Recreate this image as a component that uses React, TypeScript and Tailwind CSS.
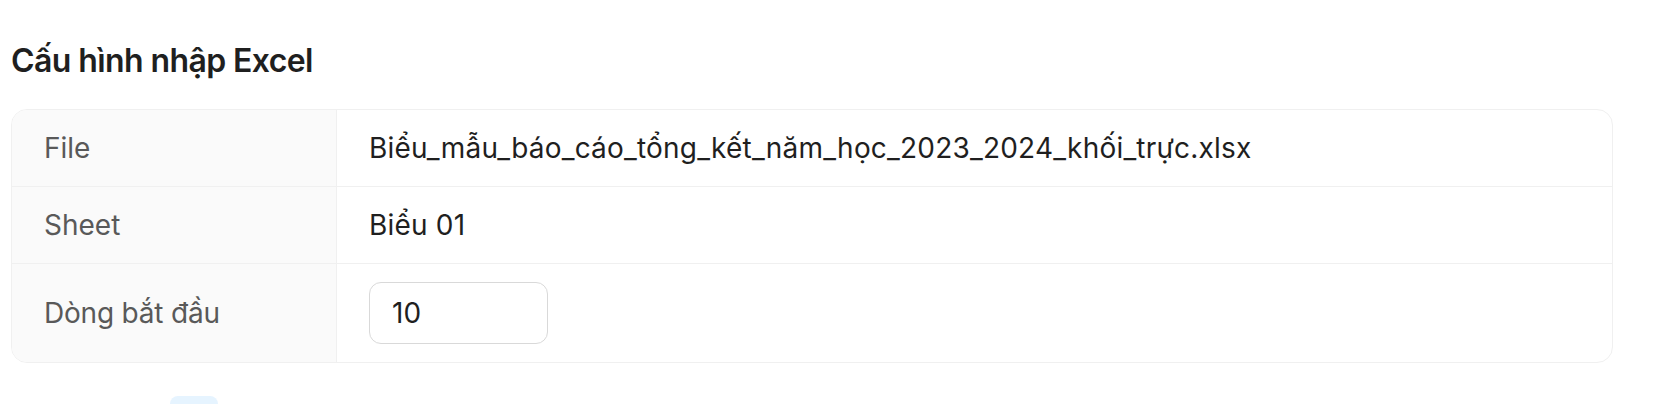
const font = { fontFamily: 'Inter, "Noto Sans", sans-serif' }

const rows = [
  { label: 'File', value: 'Biểu_mẫu_báo_cáo_tổng_kết_năm_học_2023_2024_khối_trực.xlsx' },
  { label: 'Sheet', value: 'Biểu 01' },
]

export default function App() {
  return (
    <div className="min-h-screen bg-white pl-[11px] pt-[37px]" style={font}>
      <h2 className="text-[32px] font-semibold leading-[48px] tracking-[-0.6px] text-[#1f1f1f]">Cấu hình nhập Excel</h2>

      <div className="mt-[24px] w-[1602px] overflow-hidden rounded-2xl border border-[#f0f0f0]">
        {rows.map((r) => (
          <div key={r.label} className="grid grid-cols-[325px_minmax(0,1fr)] border-b border-[#f0f0f0]">
            <div className="border-r border-[#f0f0f0] bg-[#fafafa] px-[32px] py-4 text-[28px] leading-[44px] text-[#595959]">
              {r.label}
            </div>
            <div className="px-[32px] py-4 text-[28px] leading-[44px] tracking-[0.2px] text-[#1f1f1f]">{r.value}</div>
          </div>
        ))}
        <div className="grid grid-cols-[325px_minmax(0,1fr)]">
          <div className="flex items-center border-r border-[#f0f0f0] bg-[#fafafa] px-[32px] text-[28px] leading-[44px] tracking-[-0.2px] text-[#595959]">
            Dòng bắt đầu
          </div>
          <div className="px-[32px] py-[18px]">
            <input
              defaultValue="10"
              className="h-[62px] w-[179px] rounded-xl border border-[#d9d9d9] bg-white px-[22px] text-[28px] text-[#1f1f1f] outline-none"
              style={font}
            />
          </div>
        </div>
      </div>

      <div className="ml-[159px] mt-[33px] h-[20px] w-[48px] rounded-t-lg bg-[#e6f4ff]" />
    </div>
  )
}
